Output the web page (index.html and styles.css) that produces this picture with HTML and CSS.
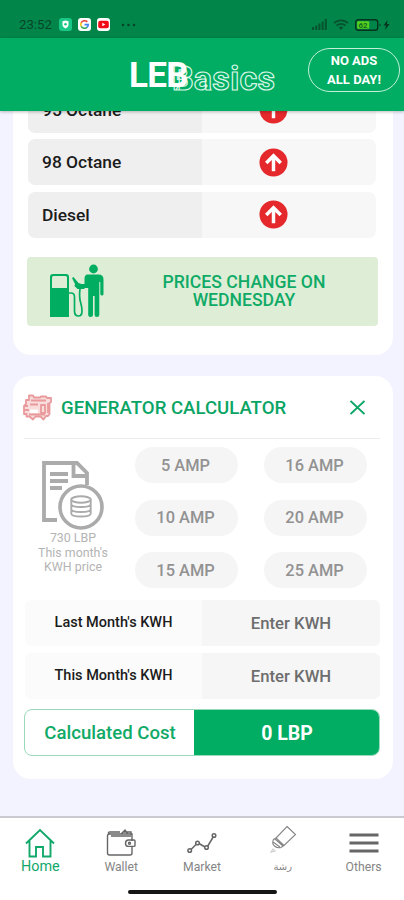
FILE: index.html
```
<!DOCTYPE html>
<html lang="en">
	<head>
		<meta charset="UTF-8" />
		<meta name="viewport" content="width=device-width, initial-scale=1.0" />
		<title>LEBBasics</title>
		<link rel="stylesheet" href="styles.css">
	</head>
	<body>
		<div class="status-bar">
			<div class="status-left">
				<span class="clock">23:52</span>
				<svg width="13" height="13" viewBox="0 0 13 13">
					<rect width="13" height="13" rx="3" fill="#19c886" />
					<path d="M3.5 3.2l3-.8 3 .8v3.6c0 1.700-1.300 3-3 3.800-1.700-.800-3-2.100-3-3.800z" fill="#fff" />
					<circle cx="6.500" cy="6.300" r="1.300" fill="#19c886" />
				</svg>
				<svg width="13" height="13" viewBox="0 0 13 13">
					<rect width="13" height="13" rx="3" fill="#fff" />
					<g fill="none" stroke-width="1.600">
						<path d="M9.300 3.900A3.800 3.800 0 0 0 3.200 4.700" stroke="#ea4335" />
						<path d="M3.200 4.700a3.800 3.800 0 0 0 0 3.600" stroke="#fbbc05" />
						<path d="M3.200 8.300a3.800 3.800 0 0 0 5.800 1.100" stroke="#34a853" />
						<path d="M9 9.400a3.800 3.800 0 0 0 1.300-2.800H6.500" stroke="#4285f4" />
					</g>
				</svg>
				<svg width="13" height="13" viewBox="0 0 13 13">
					<rect width="13" height="13" rx="3" fill="#fff" />
					<rect x="1.200" y="2.700" width="10.600" height="7.600" rx="2" fill="#f00b16" />
					<path d="M5.300 4.700v3.600l3-1.800z" fill="#fff" />
				</svg>
				<svg class="dots" width="15" height="4" viewBox="0 0 15 4" fill="#07452a">
					<circle cx="2" cy="2" r="1.300" />
					<circle cx="7.500" cy="2" r="1.300" />
					<circle cx="13" cy="2" r="1.300" />
				</svg>
			</div>
			<div class="status-right">
				<svg width="15" height="11" viewBox="0 0 15 11" fill="#07522f">
					<rect x="0" y="8" width="2" height="3" />
					<rect x="3.200" y="6.500" width="2" height="4.500" />
					<rect x="6.400" y="4.500" width="2" height="6.500" />
					<rect x="9.600" y="2.500" width="2" height="8.500" />
					<rect x="12.800" y="0" width="2" height="11" />
				</svg>
				<svg width="16" height="12" viewBox="0 0 16 12" fill="none" stroke="#07522f" stroke-width="1.800">
					<path d="M1 4.200a10 10 0 0 1 14 0M3.500 6.700a6.400 6.400 0 0 1 9 0" />
					<path d="M5.700 8.500a3.300 3.300 0 0 1 4.600 0L8 11z" fill="#07522f" stroke="none" />
				</svg>
				<svg class="battery" width="36" height="12" viewBox="0 0 36 12">
					<rect x=".700" y=".700" width="22" height="10.600" rx="2.500" fill="none" stroke="#06341f" stroke-width="1.400" />
					<rect x="2.200" y="2.200" width="12" height="7.600" rx="1" fill="#58d21c" />
					<text x="3.500" y="9" class="battery-text">62</text>
					<path d="M24.500 4.500v3l1.500-1.500z" fill="#06341f" />
					<path d="M32.500 1l-4 5.500h2.500L30 11l4.500-6H32z" fill="#06341f" />
				</svg>
			</div>
		</div>

		<header class="header">
			<div class="logo">
				<span class="logo-leb">LEB</span><span class="logo-basics">Basics</span>
			</div>
			<button type="button" class="no-ads">NO ADS<br>ALL DAY!</button>
		</header>

		<!-- Shared symbols -->
		<svg class="symbols">
			<symbol id="arrow-up" viewBox="0 0 30 30">
				<circle cx="15" cy="15" r="14.500" fill="#e4282c" />
				<path d="M15 24V8M7.500 15.500L15 8l7.500 7.500" fill="none" stroke="#fff" stroke-width="3.600" />
			</symbol>
		</svg>

		<main class="content">
			<section class="card fuel-card">
				<div class="fuel-row">
					<div class="fuel-name">95 Octane</div>
					<div class="fuel-change"><svg width="29" height="29"><use href="#arrow-up" /></svg></div>
				</div>
				<div class="fuel-row">
					<div class="fuel-name">98 Octane</div>
					<div class="fuel-change"><svg width="29" height="29"><use href="#arrow-up" /></svg></div>
				</div>
				<div class="fuel-row">
					<div class="fuel-name">Diesel</div>
					<div class="fuel-change"><svg width="29" height="29"><use href="#arrow-up" /></svg></div>
				</div>
				<div class="banner">
					<svg width="54" height="54" viewBox="0 0 54 54" fill="#00ad61">
						<path fill-rule="evenodd" d="M3 10h13q3 0 3 3v40H0V13q0-3 3-3zM3.500 12Q2 12 2 13.500V24h15V13.500Q17 12 15.500 12z" />
						<path d="M18 29h3q3.500 0 3.500 4v14q0 5 4 5 3.500 0 3.500-5 0-4-1.500-9t-.5-13" fill="none" stroke="#00ad61" stroke-width="1.700" />
						<path d="M22 14l1.500-1 5 6 6 2v4h-7l-3-3 .5-2z" />
						<circle cx="43.500" cy="5" r="4.400" />
						<path d="M37.500 10.500h11q5 0 5 5V30q0 1.500-1.500 1.500T50.300 30V18h-1v33q0 2-2.300 2t-2.400-2V32h-1.600v19q0 2-2.400 2t-2.400-2V24H29v-4h5.500v-5q0-4.500 3-4.500z" />
					</svg>
					<p>PRICES CHANGE ON<br>WEDNESDAY</p>
				</div>
			</section>

			<section class="card calc-card">
				<div class="calc-header">
					<svg width="29" height="27" viewBox="0 0 29 27" fill="none" stroke="#e99a9c" stroke-width="1.800" stroke-linejoin="round">
						<path d="M6 1.500h4l1 2h6l1-1h5l1 1.500h4v4l-1.500 1v11l-1.500 2h-2l-2.500 3.500-3-3h-5L10 25.500l-3.500-3H3.500V20H1v-8l2-2V6h3z" fill="#f9dcdc" />
						<path d="M8 6.500h15M7 10.500h8M1 12h4M1 16h5M18 11h4v8h-4zM25 9v10M6 20.500h16" />
						<path d="M7 15.500h8v3.500H7z" fill="#fff" stroke="none" />
					</svg>
					<h2>GENERATOR CALCULATOR</h2>
					<svg class="close" width="15" height="15" viewBox="0 0 15 15" fill="none" stroke="#0aa565" stroke-width="1.900">
						<path d="M.5 1l14 13M14.500 1L.5 14" />
					</svg>
				</div>

				<div class="calc-body">
					<div class="kwh-price">
						<svg width="62" height="69" viewBox="0 0 62 69" fill="none" stroke="#ababab" stroke-width="3.800">
							<path d="M15 59H2V2h33l10 10v12M31.500 3v12H45" />
							<path d="M8 13h18M8 20h18M8 27h12" />
							<circle cx="39" cy="46" r="21" fill="#fff" stroke-width="3.600" />
							<g stroke-width="1.900">
								<ellipse cx="39" cy="38.500" rx="9.700" ry="3.200" />
								<path d="M29.300 38.500v14c0 4 19.400 4 19.400 0v-14M29.300 43c0 4 19.400 4 19.400 0M29.300 48c0 4 19.400 4 19.400 0" />
							</g>
						</svg>
						<p>730 LBP<br>This month's<br>KWH price</p>
					</div>
					<div class="amps">
						<button type="button">5 AMP</button>
						<button type="button">16 AMP</button>
						<button type="button">10 AMP</button>
						<button type="button">20 AMP</button>
						<button type="button">15 AMP</button>
						<button type="button">25 AMP</button>
					</div>
				</div>

				<div class="kwh-row">
					<label>Last Month's KWH</label>
					<div class="kwh-input">Enter KWH</div>
				</div>
				<div class="kwh-row">
					<label>This Month's KWH</label>
					<div class="kwh-input">Enter KWH</div>
				</div>
				<div class="cost">
					<div class="cost-label">Calculated Cost</div>
					<div class="cost-value">0 LBP</div>
				</div>
			</section>
		</main>

		<nav class="tabs">
			<a class="tab active">
				<svg width="30" height="30" viewBox="0 0 30 30" fill="none" stroke="#12a86b" stroke-width="1.900">
					<path d="M1 15.500L15 2l14 13.500M4.500 13v15.500h6.500v-9.500h7v9.500h7.500V13" />
				</svg>
				<span>Home</span>
			</a>
			<a class="tab">
				<svg width="30" height="30" viewBox="0 0 30 30" fill="none" stroke="#666" stroke-width="1.400">
					<path d="M26 13V6H3.500Q1.500 6 1.500 8v17q0 2 2 2H24q2 0 2-2v-6.500M3 6q-1.500-2 1-2h10M5 8h20M15 6l4-4 3 4M17 4h8v3" />
					<path d="M28 12h-5.500q-3 0-3 3.200t3 3.200H28q1 0 1-1V13q0-1-1-1z" />
					<circle cx="23.500" cy="15.200" r="1" />
				</svg>
				<span>Wallet</span>
			</a>
			<a class="tab">
				<svg width="30" height="30" viewBox="0 0 30 30" fill="none" stroke="#666" stroke-width="1.500">
					<path d="M4 21.500l5-5M12 15.500l6 3.500M20.500 18.500l6-10" />
					<circle cx="2.700" cy="22.500" r="1.800" />
					<circle cx="10.500" cy="15" r="1.800" />
					<circle cx="19.500" cy="19.500" r="1.800" />
					<circle cx="27" cy="7.500" r="1.800" />
				</svg>
				<span>Market</span>
			</a>
			<a class="tab spray">
				<svg width="30" height="30" viewBox="0 0 30 30" fill="none" stroke="#858585" stroke-width="1.100">
					<path d="M19 2.500l8.500 8L16 21.500l-8-7.500zM8 14l-2.500 1.500q-2 4 1 6.500t6.500 1.500l3-2M7 15l8 7M5 18l7 5" />
					<path d="M5 25l-2 3 4-1z" stroke="#ccc" />
				</svg>
				<span lang="ar">رشة</span>
			</a>
			<a class="tab">
				<svg width="30" height="30" viewBox="0 0 30 30" fill="none" stroke="#666" stroke-width="2.800">
					<path d="M.5 7h29M.5 15h29M.5 23h29" />
				</svg>
				<span>Others</span>
			</a>
			<div class="home-indicator"></div>
		</nav>
	</body>
</html>
```
FILE: styles.css
```
* {
	box-sizing: border-box;
}
body {
	font-family: Roboto, sans-serif;
	margin: 0;
	height: 900px;
	display: flex;
	flex-direction: column;
	background-color: #f3f3ff;
	color: #1c1c1c;
	overflow: hidden;
}
button {
	font-family: inherit;
	border: none;
	padding: 0;
}
p,
h2 {
	margin: 0;
}
svg {
	display: block;
	flex-shrink: 0;
}
.symbols {
	width: 0;
	height: 0;
}

/* Status bar */
.status-bar {
	height: 38px;
	flex-shrink: 0;
	display: flex;
	justify-content: space-between;
	padding: 11px 13px 0 19px;
	background-color: #028549;
}
.status-left,
.status-right {
	display: flex;
	align-items: center;
	height: 27px;
}
.status-left {
	gap: 6px;
}
.clock {
	width: 34px;
	font-size: 13.2px;
	color: #07452a;
}
.dots {
	margin-left: 5px;
}
.status-right {
	gap: 6px;
}
.battery-text {
	font-size: 8px;
	font-weight: bold;
	fill: #126b25;
}

/* Header */
.header {
	position: relative;
	z-index: 1;
	height: 73px;
	flex-shrink: 0;
	display: flex;
	justify-content: space-between;
	padding: 10px 4px 0 129px;
	background-color: #00ad62;
	box-shadow: 0 1px 3px rgba(0, 0, 0, 0.25);
}
.logo {
	display: flex;
	line-height: 54px;
}
.logo-leb {
	position: relative;
	z-index: 1;
	margin-top: 1px;
	font-size: 35px;
	font-weight: bold;
	letter-spacing: -0.7px;
	color: #fff;
}
.logo-basics {
	margin: 3px 0 0 -16px;
	font-size: 34px;
	font-weight: bold;
	letter-spacing: 0.3px;
	color: #00ad62;
	-webkit-text-stroke: 1.2px #d7f5e5;
}
.no-ads {
	width: 92px;
	height: 44px;
	border: 1px solid #c4f0da;
	border-radius: 22px;
	background: none;
	color: #fff;
	font-size: 13px;
	font-weight: bold;
	line-height: 19px;
}

/* Scrolled page content */
.content {
	flex: 1;
	min-height: 0;
	overflow: hidden;
	padding: 0 11px 0 13px;
}
.card {
	background-color: #fff;
	border-radius: 18px;
}

/* Fuel prices */
.fuel-card {
	height: 284px;
	margin-top: -40px;
	padding: 15.5px 14px 0;
}
.fuel-row {
	display: flex;
	height: 46px;
	margin: 0 3px 6.5px 1px;
	border-radius: 7px;
	overflow: hidden;
}
.fuel-name {
	width: 174px;
	padding-left: 14px;
	background-color: #efefef;
	font-size: 17.4px;
	font-weight: 500;
	line-height: 47px;
}
.fuel-change {
	flex: 1;
	padding: 8.5px 0 0 57px;
	background-color: #f7f7f7;
}
.banner {
	display: flex;
	align-items: center;
	height: 69px;
	margin-top: 19px;
	margin-right: 1px;
	padding-left: 23px;
	border-radius: 4px;
	background-color: #deeed6;
}
.banner p {
	flex: 1;
	padding-left: 6px;
	text-align: center;
	font-size: 17.6px;
	font-weight: 500;
	line-height: 18px;
	color: #10aa67;
}

/* Generator calculator */
.calc-card {
	height: 403px;
	margin-top: 21px;
	padding: 0 12px 0 11px;
}
.calc-header {
	display: flex;
	align-items: center;
	height: 63px;
	margin-right: 1px;
	padding-top: 1px;
	border-bottom: 1px solid #ededed;
}
.calc-header svg:first-child {
	margin-left: -1px;
}
.calc-header h2 {
	margin-left: 9px;
	font-size: 18.6px;
	font-weight: 500;
	color: #0aa565;
}
.calc-header .close {
	margin: 0 15px 0 auto;
}
.calc-body {
	display: flex;
	height: 161px;
	padding-top: 8px;
}
.kwh-price {
	width: 98px;
	padding: 14px 0 0;
	text-align: center;
	font-size: 12.4px;
	line-height: 14.5px;
	color: #b4b4b4;
}
.kwh-price svg {
	margin-left: 18px;
}
.kwh-price p {
	margin: 1px -2px 0;
}
.amps {
	display: grid;
	grid-template-columns: 103px 103px;
	grid-auto-rows: 36px;
	gap: 16.5px 26px;
	margin-left: 13px;
}
.amps button {
	padding-right: 2px;
	border-radius: 18px;
	background-color: #f5f5f5;
	color: #929292;
	font-size: 16.4px;
	font-weight: 500;
}
.kwh-row {
	display: flex;
	height: 46px;
	margin: 0 1px 6.5px;
	border-radius: 6px;
	overflow: hidden;
	text-align: center;
	line-height: 46px;
	font-weight: 500;
}
.kwh-row label {
	width: 177px;
	background-color: #fbfbfb;
	font-size: 14.5px;
}
.kwh-input {
	flex: 1;
	padding-top: 1px;
	background-color: #f6f6f6;
	color: #6d6d6d;
	font-size: 16.7px;
}
.cost {
	display: flex;
	height: 47px;
	margin-top: 10px;
	margin-right: 1px;
	border: 1px solid #9ad9bb;
	border-radius: 8px;
	overflow: hidden;
	text-align: center;
	line-height: 46px;
	font-size: 18.6px;
}
.cost-label {
	width: 170px;
	color: #10aa67;
	font-weight: 500;
}
.cost-value {
	flex: 1;
	margin: -1px;
	background-color: #00ad62;
	color: #fff;
	font-size: 19.5px;
	font-weight: bold;
	line-height: 49px;
}

/* Bottom tabs */
.tabs {
	position: relative;
	display: flex;
	height: 84px;
	flex-shrink: 0;
	border-top: 2px solid #c9c9cf;
	background-color: #fff;
}
.tab {
	width: 81px;
	display: flex;
	flex-direction: column;
	align-items: center;
	padding-top: 10px;
	font-size: 12.2px;
	line-height: 18px;
	color: #858585;
}
.tab.active {
	font-size: 14.4px;
	color: #12a86b;
}
.tab.spray {
	padding-top: 6px;
}
.tab.spray span {
	margin-top: 4px;
	font-family: "DejaVu Sans", sans-serif;
	font-size: 10px;
}
.home-indicator {
	position: absolute;
	left: 128px;
	bottom: 6px;
	width: 149px;
	height: 4px;
	border-radius: 2px;
	background-color: #151515;
}
```
